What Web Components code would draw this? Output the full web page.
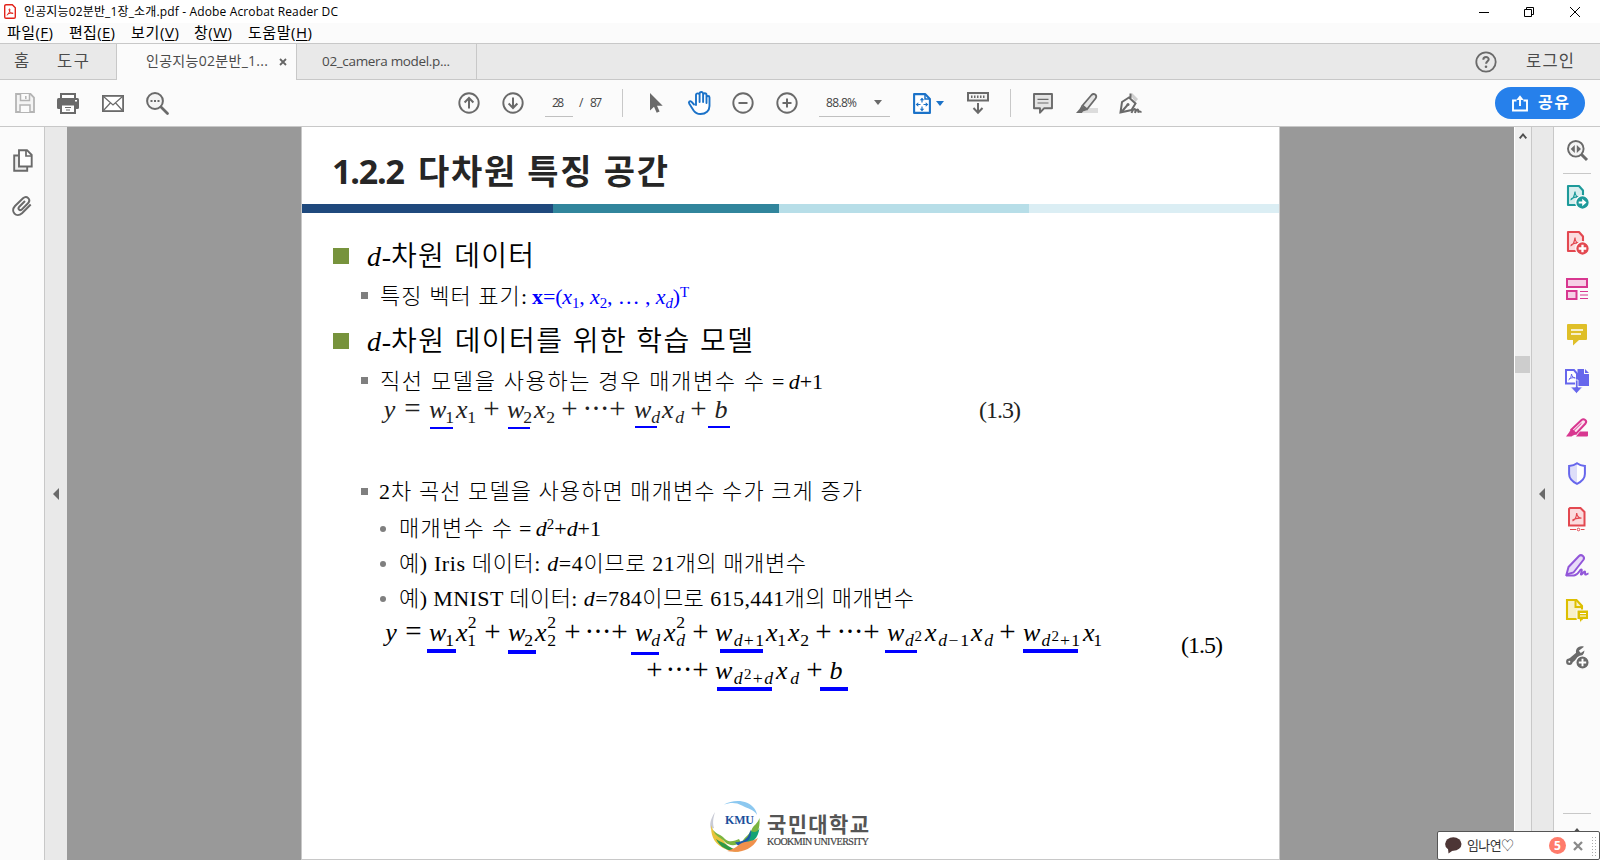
<!DOCTYPE html>
<html lang="ko">
<head>
<meta charset="utf-8">
<title>Adobe Acrobat Reader DC</title>
<style>
html,body{margin:0;padding:0;height:860px;overflow:hidden;background:#fbfbfb}
body{font-family:"Open Sans","Noto Sans CJK KR",sans-serif;color:#000}
</style>
</head>
<body>
<reader-app></reader-app>
<script>
const ICONS = {
pdf:[12,15,`<path d="M2 .7h6.3L11.3 3.700V13a1.300 1.300 0 0 1-1.300 1.300H2A1.300 1.300 0 0 1 .7 13V2A1.300 1.300 0 0 1 2 .7z" fill="#fff" stroke="#e2231a" stroke-width="1.400"/><path d="M2.800 11.200c1.500-.6 2.700-2.800 3.100-5.400.1-1.300-1-1.300-.8 0 .4 2.200 2 3.700 4 3.700M3.400 10.200c1.600-.9 3.800-1.300 5.800-1" fill="none" stroke="#e2231a" stroke-width="1"/>`],
min:[10,10,`<path d="M0 5.500h10" stroke="#000"/>`],
restore:[10,10,`<path d="M.5 2.500h7v7h-7zM2.500 2.500v-2h7v7h-2" fill="none" stroke="#000"/>`],
close:[10,10,`<path d="M0 0l10 10M10 0L0 10" stroke="#000"/>`],
tabx:[8,8,`<path d="M1 1l6 6M7 1L1 7" stroke="#666" stroke-width="1.800"/>`],
help:[22,22,`<circle cx="11" cy="11" r="9.700" fill="none" stroke="#6a6a6a" stroke-width="1.800"/><path d="M8.300 8.700c0-3.500 5.600-3.300 5.400-.3-.1 1.800-2.600 2-2.600 4.300" fill="none" stroke="#6a6a6a" stroke-width="2"/><circle cx="11" cy="15.700" r="1.300" fill="#6a6a6a"/>`],
save:[20,20,`<path d="M1 1h14.500L19 4.500V19H1z" fill="#f4f4f4" stroke="#b4b4b4" stroke-width="1.800"/><path d="M5.500 1v6.500h9V1M5 19v-7h10v7" fill="#fbfbfb" stroke="#b4b4b4" stroke-width="1.500"/><path d="M10.800 3v3" stroke="#b4b4b4" stroke-width="1.500"/>`],
print:[22,21,`<path d="M4 5V1h14v4" fill="#fff" stroke="#6a6a6a" stroke-width="2"/><rect y="5" width="22" height="11" rx="1.500" fill="#6a6a6a"/><rect x="4" y="11.500" width="14" height="8.500" fill="#fff" stroke="#6a6a6a" stroke-width="2"/><path d="M8 14.500h6M9 17h4" stroke="#6a6a6a"/><rect x="18" y="7" width="2" height="1.500" fill="#fff"/>`],
mail:[22,17,`<rect x=".9" y=".9" width="20.200" height="15.200" fill="#fff" stroke="#6a6a6a" stroke-width="1.800"/><path d="M1.500 1.500L11 10l9.500-8.500M1.500 15.500L8.300 8M20.500 15.500L13.700 8" fill="none" stroke="#6a6a6a" stroke-width="1.200"/>`],
find:[23,23,`<circle cx="9" cy="9" r="7.900" fill="#f4f4f4" stroke="#6a6a6a" stroke-width="2"/><path d="M15 15l6.500 6.500" stroke="#6a6a6a" stroke-width="2.800" stroke-linecap="round"/><path d="M4.500 9h2M8 9h2M11.500 9h2" stroke="#6a6a6a" stroke-width="2"/>`],
up:[22,22,`<circle cx="11" cy="11" r="9.700" fill="none" stroke="#6a6a6a" stroke-width="1.900"/><path d="M11 16.500V6.500M6.600 10.500L11 6l4.400 4.500" fill="none" stroke="#6a6a6a" stroke-width="2"/>`],
down:[22,22,`<circle cx="11" cy="11" r="9.700" fill="none" stroke="#6a6a6a" stroke-width="1.900"/><path d="M11 5.500v10M6.600 11.500L11 16l4.400-4.500" fill="none" stroke="#6a6a6a" stroke-width="2"/>`],
minus:[22,22,`<circle cx="11" cy="11" r="9.700" fill="none" stroke="#6a6a6a" stroke-width="1.900"/><path d="M6.500 11h9" stroke="#6a6a6a" stroke-width="2"/>`],
plus:[22,22,`<circle cx="11" cy="11" r="9.700" fill="none" stroke="#6a6a6a" stroke-width="1.900"/><path d="M6.500 11h9M11 6.500v9" stroke="#6a6a6a" stroke-width="2"/>`],
cursor:[13,20,`<path d="M0 0v17.500l4-3.800 2.700 6L9.600 18.400 7 12.700h5.700z" fill="#6a6a6a"/>`],
hand:[23,24,`<path d="M6 13.500L3.600 10.900C1.900 9.300.2 10.800 1.300 12.800L5.600 19.500C7.300 22 9 23 12.500 23c5.500 0 9-3.500 9-8V6.500c0-2-3-2-3 0V4c0-2.300-3.400-2.300-3.400 0V2.700c0-2.300-3.500-2.300-3.500 0V4C11.500 1.800 8 1.800 8 4v10M11.600 11V3.500M15.100 11V3.500M18.500 12V6" fill="#fff" stroke="#1b72c8" stroke-width="1.900" stroke-linecap="round" stroke-linejoin="round"/>`],
caret:[8,5,`<path d="M0 0h8L4 5z" fill="#6a6a6a"/>`],
bcaret:[8,5,`<path d="M0 0h8L4 5z" fill="#1b72c8"/>`],
fit:[18,21,`<path d="M1.100 1.100h11L16.900 6v13.900H1.100z" fill="#fff" stroke="#1b72c8" stroke-width="2.100" stroke-linejoin="round"/><path d="M12 1v5h5" fill="none" stroke="#1b72c8" stroke-width="1.500"/><path d="M9 5.500v4M9 13.500v4M3.500 11.500h4M10.500 11.500h4" stroke="#1b72c8" stroke-width="1.200"/><path d="M6.700 7.300L9 4.700l2.300 2.600zM6.700 15.700l2.300 2.600 2.300-2.600zM5.300 9.200L2.700 11.500l2.600 2.300zM12.700 9.200l2.600 2.300-2.600 2.300z" fill="#1b72c8"/>`],
ruler:[22,22,`<rect x="1" y="1" width="20" height="7.500" fill="#f4f4f4" stroke="#6a6a6a" stroke-width="2"/><path d="M4 4.800h14" stroke="#6a6a6a" stroke-width="2.500" stroke-dasharray="1.500 1.500"/><path d="M11 11v9M6.500 16l4.500 4.700 4.500-4.700" fill="none" stroke="#6a6a6a" stroke-width="2"/>`],
note:[20,21,`<path d="M1 1h18v14.300h-8L7 19.700v-4.400H1z" fill="#e4e4e4" stroke="#6a6a6a" stroke-width="1.900" stroke-linejoin="round"/><path d="M4.500 6.300h11M4.500 10h11" stroke="#6a6a6a" stroke-width="1.200"/>`],
marker:[22,21,`<path d="M6 20h16v-5H11z" fill="#dcdcdc"/><path d="M6.500 12.500L15.500 2c2.500-2.500 6 .3 4.200 3.200L11 16.300z" fill="#e4e4e4" stroke="#6a6a6a" stroke-width="1.800"/><path d="M5.500 12.500l5.800 4.500L7 18.500 6 20H0l3.500-4z" fill="#6a6a6a"/>`],
pen:[24,21,`<path d="M11.500 2.500L13 0l6 6-2.500 3z" fill="#cfcfcf"/><path d="M1.500 19.500l1.500-10.500 7-4.500 6.500 6-4 6.500zM11.500.5v4.500M2 19.500l6.500-7.500" fill="none" stroke="#6a6a6a" stroke-width="2"/><circle cx="9" cy="11.500" r="1.500" fill="#6a6a6a"/><path d="M12.500 20c2-5 5-6 3.500 0 2-5 4-4.500 3-.5 1.500-2 2-.5 3.500-.5" fill="none" stroke="#6a6a6a" stroke-width="1.900"/>`],
share:[16,17,`<path d="M4.500 5.500H1v10h14v-10h-3.500" fill="none" stroke="#fff" stroke-width="1.900"/><path d="M8 11V2.500" stroke="#fff" stroke-width="1.900"/><path d="M4.300 5L8 .3 11.700 5z" fill="#fff"/>`],
pages:[20,23,`<path d="M5 6.500H1.200v15.200h13V18" fill="#eee" stroke="#6a6a6a" stroke-width="1.900"/><path d="M6 1.200h8L18.700 6v11.500H6z" fill="#fff" stroke="#6a6a6a" stroke-width="1.900"/><path d="M13 1v6h6" fill="none" stroke="#6a6a6a" stroke-width="1.700"/>`],
clip:[20,22,`<path d="M13 6L7.300 11.700c-2 2.200.4 4.600 2.500 2.700L16 8.300c3.400-3.800-1.200-8.300-5-5L3 11c-5 5.500 1.300 12.300 7 7.200L18.700 9.500" fill="none" stroke="#6a6a6a" stroke-width="2"/>`],
tri:[6,12,`<path d="M6 0v12L0 6z" fill="#6a6a6a"/>`],
chev:[8,6,`<path d="M.7 5.300L4 1.500l3.300 3.800" fill="none" stroke="#505050" stroke-width="1.900"/>`],
rfind:[21,21,`<circle cx="8.800" cy="8.800" r="7.800" fill="#f4f4f4" stroke="#6a6a6a" stroke-width="1.900"/><path d="M14.500 14.500l5.500 5.500" stroke="#6a6a6a" stroke-width="3"/><path d="M7.800 5v8L3.700 9zM9.800 5v8L14 9z" fill="#6a6a6a"/>`],
exp:[23,24,`<path d="M2 1h11l4 4.500V20H2z" fill="#d8eeee" stroke="#1d9a9a" stroke-width="2.100" stroke-linejoin="round"/><path d="M4.500 15c2-.8 4-4 4.500-8.500M9 6.500C9 10 11 12.500 14 12.500M5 14c2-1.500 5-2.300 8.500-2" fill="none" stroke="#1d9a9a" stroke-width="1.200"/><circle cx="16.500" cy="17.500" r="6.800" fill="#1d9a9a" stroke="#fbfbfb" stroke-width="1.300"/><path d="M12.700 16.400h3.500v-2.700l4.300 3.800-4.300 3.800v-2.700h-3.500z" fill="#fff"/>`],
crt:[23,24,`<path d="M2 1h11l4 4.500V20H2z" fill="#fbdcde" stroke="#e34850" stroke-width="2.100" stroke-linejoin="round"/><path d="M4.500 15c2-.8 4-4 4.500-8.500M9 6.500C9 10 11 12.500 14 12.500M5 14c2-1.500 5-2.300 8.500-2" fill="none" stroke="#e34850" stroke-width="1.200"/><circle cx="16.500" cy="17.500" r="6.800" fill="#e34850" stroke="#fbfbfb" stroke-width="1.300"/><path d="M12.700 17.500h7.600M16.500 13.700v7.600" stroke="#fff" stroke-width="2.300"/>`],
org:[22,22,`<rect x="1" y="1" width="20" height="8" fill="#f6d0e6" stroke="#d83790" stroke-width="2"/><rect x="1" y="13" width="9.500" height="8" fill="#f6d0e6" stroke="#d83790" stroke-width="2"/><path d="M14 13.500h8M14 17h8M14 20.500h8" stroke="#d83790"/>`],
ycom:[20,22,`<path d="M1 0h18a1 1 0 0 1 1 1v14a1 1 0 0 1-1 1h-7l-6 5.500V16H1a1 1 0 0 1-1-1V1a1 1 0 0 1 1-1z" fill="#dfbf28"/><path d="M4 6h12M4 10h10" stroke="#fff" stroke-width="1.600"/>`],
comb:[24,25,`<path d="M12.500 0H19v5h5v12H12.500z" fill="#6767ec"/><path d="M20 0l4 4h-4z" fill="#6767ec"/><path d="M1 1h8l3 3.500V14.500H1z" fill="#fff" stroke="#6767ec" stroke-width="2"/><path d="M3.500 11c2-1 2.800-3.500 3-6M6.500 5C7 8 8.500 8.800 10.500 9M4 10c2-1.200 4-1.500 6-1.200" fill="none" stroke="#6767ec"/><path d="M10.500 11h2.500v7h4.500l-6 6.500-6-6.500h5z" fill="#6767ec" stroke="#fbfbfb" stroke-width=".8"/>`],
red:[22,19,`<path d="M12 18.500h9a1 1 0 0 0 1-1v-4H14l-4 5z" fill="#d83790"/><path d="M5.500 11.500L15.500 2c2.500-2 6 1 4 3.500L10 15.700z" fill="#fbe3f0" stroke="#d83790" stroke-width="2"/><path d="M7.500 13l8-7.800" stroke="#d83790" stroke-width="1"/><path d="M5 11l6 5-4 1.500-1.500 1H0l3-4z" fill="#d83790"/>`],
shield:[18,23,`<path d="M9 1.200c2.300 1.800 4.800 2.500 7.900 2.800v8c0 4.500-3.500 7.700-7.900 9.800-4.400-2.100-7.900-5.300-7.900-9.800V4C4.200 3.700 6.700 3 9 1.200z" fill="#fff"/><path d="M9 1.200v20.600c-4.400-2.100-7.900-5.300-7.900-9.800V4C4.200 3.700 6.700 3 9 1.200z" fill="#dedef9"/><path d="M9 1.200c2.300 1.800 4.800 2.500 7.900 2.800v8c0 4.500-3.500 7.700-7.900 9.800-4.400-2.100-7.900-5.300-7.900-9.800V4C4.200 3.700 6.700 3 9 1.200z" fill="none" stroke="#6767ec" stroke-width="2"/>`],
comp:[18,24,`<path d="M2 1h10.500L16.500 5v13.500H1V2z" fill="#fbdcde" stroke="#e34850" stroke-width="2"/><path d="M4.500 14c2-1 4-4 4.200-8M8.700 6C9 9 10.500 11 13.500 11.200M4.500 13c2-1.200 5-2 8.500-1.800" fill="none" stroke="#e34850" stroke-width="1.200"/><path d="M2 22.500h6M13 22.500h3.500" stroke="#e34850" stroke-width="1.200"/><circle cx="10.500" cy="22.500" r="1.300" fill="none" stroke="#e34850"/>`],
sign:[24,23,`<path d="M3.500 13L14 2c2.500-2.300 6.500 1 4.300 4L8.500 18.500 1.500 20.500z" fill="#e8dcf8" stroke="#9256d9" stroke-width="2"/><path d="M1 21.500h8c5-.5 6-7 7.500-6s-2 5.500 0 5 2-3.500 3.300-3-.8 3.500 1 3 1.200-1 2.700-.7" fill="none" stroke="#9256d9" stroke-width="1.900"/>`],
ysend:[22,24,`<path d="M1 1h9.500L16 7v13H1z" fill="#f8f0c8" stroke="#ddbf00" stroke-width="2.100"/><path d="M9.500 1v7H16" fill="none" stroke="#ddbf00" stroke-width="2"/><path d="M11 11h11.500v9.500h-5.500l-3.500 3.500v-3.500H11z" fill="#ddbf00" stroke="#fbfbfb"/><path d="M14 14.500h6M14 17h6" stroke="#fff" stroke-width="1.200"/>`],
wrench:[23,23,`<path d="M2.500 16.500L12 8.500" stroke="#6a6a6a" stroke-width="5"/><circle cx="3.300" cy="15.700" r="3.200" fill="#6a6a6a"/><circle cx="3.300" cy="15.700" r="1" fill="#fff"/><path d="M18 .7C12 -1 8.500 3.500 10.500 8.500 13 11.800 18 10.500 18.500 4.500L14.800 7 12.800 4.700z" fill="#6a6a6a"/><circle cx="16.500" cy="16.500" r="6.700" fill="#6a6a6a" stroke="#fbfbfb" stroke-width="1.300"/><path d="M12.800 16.500h7.400M16.500 12.800v7.400" stroke="#fff" stroke-width="1.900"/>`],
bubble:[17,17,`<ellipse cx="8.300" cy="7" rx="8.200" ry="6.800" fill="#4d3636"/><path d="M3 11.500L3.500 16.500 8.500 13z" fill="#4d3636"/>`],
px:[10,10,`<path d="M1 1l8 8M9 1L1 9" stroke="#8a8a8a" stroke-width="2.300"/>`],
logo:[50,52,`<path d="M14 4.500C23-1 38-.5 44 8c1.800 2.500 2.800 4.500 3 7C44 9 37 8.500 32 5.500 26 2 20 2.500 14 4.500z" fill="#8cc8f0"/><path d="M5 12C0 20-.5 25 1 29l3-1C2.500 23 3 19 5 12z" fill="#c9cbd6"/><path d="M1 25C1 33 2 42 13 48c7 3.500 13 4 17 3.500C22 48 17 47 13 40 9 35 3 33 1 25z" fill="#e9c43b"/><path d="M3 30c4 5 8 4 12 9 4 4 10 2 14 0l2 4c-6 3-12 3-16-1C10 37 6 37 3 30z" fill="#7bb540"/><path d="M6 39c4 3 9 4 12 7 3 2 6 3 10 5-8 1-18-3-22-12z" fill="#2f9a48"/><path d="M49.500 18c1 14-5 24-17 25-1-4 6-7 9-13 2-5 6-6 8-12z" fill="#7bb540"/><path d="M49.500 28C48 40 40 45 33 43c1-4 7-5 8-12 3 2 7 1 8.500-3z" fill="#14a374"/><path d="M25 42.500c6-1 13-1 15.500-13 1.500 8-1 13-12.500 16z" fill="#1d5aa8"/><path d="M17 51c9 2 25 1 31-13-6 4-13 3-18 6-3 3-7 5-13 7z" fill="#f0914d"/>`]
};
const fits=[];
const define=(name,css,html='<slot></slot>',fn)=>customElements.define(name,class extends HTMLElement{
  constructor(){super();this.attachShadow({mode:'open'}).innerHTML=`<style>${css}</style>${typeof html==='function'?'':html}`;}
  connectedCallback(){ if(typeof html==='function'&&!this.ready){this.ready=true;this.shadowRoot.innerHTML+=html(this);} if(fn)fn(this);}
});
// Places a list of [x, width, markup] one after another, the space between as a margin.
const row=(start,items)=>{let p=start;return items.map(([x,w,h])=>{const g=x-p;p=x+w;return `<div style="margin-left:${g}px;width:${w}px;flex:none">${h}</div>`}).join('')};
const ic=n=>`<ui-icon name="${n}"></ui-icon>`;
const ft=(w,t)=>`<fit-text w="${w}">${t}</fit-text>`;

define('ui-icon',':host{display:block;line-height:0}svg{display:block;overflow:visible}',el=>{const [w,h,s]=ICONS[el.getAttribute('name')];return `<svg width="${w}" height="${h}" viewBox="0 0 ${w} ${h}">${s}</svg>`});
// Spreads its text over a given width by letter spacing.
define('fit-text',':host{display:block;white-space:nowrap}','<slot></slot>',el=>fits.push(el));

define('title-bar',':host{display:flex;height:23px;align-items:center;background:#fff;font-size:12px;line-height:23px}',()=>row(0,[[4,12,ic('pdf')],[24,314,ft(314,'인공지능02분반_1장_소개.pdf - Adobe Acrobat Reader DC')],[1479,10,ic('min')],[1524,10,ic('restore')],[1570,10,ic('close')]]));
define('menu-bar',':host{display:flex;height:20px;background:#fbfbfb;font-size:15px;line-height:19px}u{text-underline-offset:2px}',()=>row(0,[[7,46,ft(46,'파일(<u>F</u>)')],[69,46,ft(46,'편집(<u>E</u>)')],[131,48,ft(48,'보기(<u>V</u>)')],[194,38,ft(38,'창(<u>W</u>)')],[248,64,ft(64,'도움말(<u>H</u>)')]]));
define('tab-bar',`:host{display:flex;height:37px;box-sizing:border-box;border-top:1px solid #c8c8c8;border-bottom:1px solid #c8c8c8;background:#e9e9e9;color:#4b4b4b;font-size:16.500px;line-height:32px}
section{display:flex;align-items:center;box-sizing:border-box;flex:none;border-right:1px solid #c8c8c8;height:35px}.on{background:#fbfbfb;height:36px;font-size:14px}.two{font-size:13.500px}.r{border:0;flex:1}fit-text{padding-bottom:2px}`,
()=>`<section style="width:117px">${row(0,[[14,17,ft(17,'홈')],[57,32,ft(32,'도구')]])}</section><section class="on" style="width:180px">${row(117,[[146,122,ft(122,'인공지능02분반_1...')],[279,8,ic('tabx')]])}</section><section class="two" style="width:180px">${row(297,[[322,128,ft(128,'02_camera model.p...')]])}</section><section class="r">${row(477,[[1474.500,22,ic('help')],[1526,48,ft(48,'로그인')]])}</section>`);
define('share-button',':host{display:flex;align-items:center;width:90px;height:32px;border-radius:16px;background:#2680eb;color:#fff;font-weight:600;font-size:16px;line-height:28px}fit-text{padding-bottom:2px}',()=>row(0,[[17,16,ic('share')],[43,31,ft(31,'공유')]]));
define('tool-bar',`:host{display:flex;align-items:center;height:47px;box-sizing:border-box;border-bottom:1px solid #c8c8c8;background:#fbfbfb;color:#444;font-size:12px}
.sep{height:28px;background:#c8c8c8}.f{height:27px;line-height:25px;box-sizing:border-box;border-bottom:1px solid #c0c0c0;display:flex;align-items:center}.v{line-height:25px;padding-bottom:2px}`,
()=>row(0,[[15,20,ic('save')],[57,22,ic('print')],[102,22,ic('mail')],[146,23,ic('find')],[458,22,ic('up')],[502,22,ic('down')],[545,28,`<div class="f">${row(0,[[7,12,ft(12,'28')]])}</div>`],[579,5,`<div class="v">${ft(5,'/')}</div>`],[590,12,`<div class="v">${ft(12,'87')}</div>`],[622,1,'<div class="sep"></div>'],[650,13,ic('cursor')],[688,23,ic('hand')],[732,22,ic('minus')],[776,22,ic('plus')],[819,71,`<div class="f">${row(0,[[7,31,ft(31,'88.8%')],[55,8,ic('caret')]])}</div>`],[913,18,ic('fit')],[936,8,ic('bcaret')],[967,22,ic('ruler')],[1010,1,'<div class="sep"></div>'],[1033,20,ic('note')],[1076,22,ic('marker')],[1119,24,ic('pen')],[1495,90,'<share-button></share-button>']]));
define('side-nav',':host{display:flex;flex-direction:column;align-items:flex-start;width:44px;background:#fbfbfb;border-right:1px solid #c8c8c8;flex:none}.a{margin:22px 0 0 13px}.b{margin:23px 0 0 12px}',`<div class="a">${ic('pages')}</div><div class="b">${ic('clip')}</div>`);
define('fold-strip',':host{display:flex;align-items:center;justify-content:center;width:22px;background:#e9e9e9;flex:none;box-sizing:border-box;padding-right:0}');
define('tool-rail',':host{display:flex;flex-direction:column;width:46px;box-sizing:border-box;padding-left:1px;border-left:1px solid #c8c8c8;background:#fbfbfb;flex:none}.s{height:46px;display:flex;align-items:center;justify-content:center;flex:none}hr{border:0;height:1px;background:#c8c8c8;width:28px;margin:0 auto;flex:none}',
`<div class="s">${ic('rfind')}</div><hr>${['exp','crt','org','ycom','comb','red','shield','comp','sign','ysend','wrench'].map(n=>`<div class="s">${ic(n)}</div>`).join('')}<hr style="margin-top:133px"><div style="margin:14px auto 0">${ic('chev')}</div>`);
define('scroll-bar',':host{display:flex;flex-direction:column;align-items:center;width:16px;background:#f0f0f0;border-left:1px solid #fff;border-right:1px solid #c8c8c8;flex:none}.t{width:15px;height:17px;background:#cdcdcd;margin-top:217px;align-self:flex-start}',`<div style="margin-top:6px">${ic('chev')}</div><div class="t"></div>`);

// One line of the slide: its bottom edge is the baseline of its text.
define('slide-line',`:host{display:flex;align-items:baseline;line-height:1;flex:none;height:var(--b)}:host::before{content:"";width:0;height:var(--b);flex:none}
.bul{position:relative;height:1px}.bul i{display:block;position:absolute;left:0;bottom:0}
fit-text{font-family:"Liberation Serif","Noto Sans CJK KR",serif;font-weight:300}
.k fit-text{font-family:"Noto Sans CJK KR",sans-serif;font-weight:350}
i,b,em{line-height:0}b{font-weight:700}em{font-style:italic}
sub,sup{font-size:.68em;line-height:0;vertical-align:baseline;position:relative}sub{top:.3em}sup{top:-.5em}
.t fit-text{font-family:"Open Sans","Noto Sans CJK KR",sans-serif;font-weight:700}
.m{position:relative}.m>u{position:absolute;background:#00f;display:block}.m fit-text{font-style:italic;font-family:"Liberation Serif",serif;font-weight:400}
.n fit-text{font-style:normal}.m sup{top:-.75em;margin-right:-.56em}sub sup,.m sub sup{font-size:.85em;top:-.35em;margin:0}`,
el=>{const L=LINES[el.getAttribute('n')];let p=302;return L.items.map(([x,w,h,c='',u,fs])=>{const g=x-p;p=x+w;const ul=u?`<u style="left:${u[0]-x}px;width:${u[1]-u[0]}px;bottom:${6-u[2]}px;height:${u[3]}px"></u>`:'';const inner=c==='bul'?h:`<fit-text ${c.includes('o')?'':`w="${w}"`} style="font-size:${fs||L.fs}px;${L.st||''}${c.includes('o')?'text-align:center;':''}">${h}</fit-text>`;return `<div class="${c==='bul'?'bul':c}" style="margin-left:${g}px;width:${w}px;flex:none">${inner}${ul}</div>`}).join('')});
const sq=(s,c,b,r=0)=>`<i style="width:${s}px;height:${s}px;background:${c};bottom:${b}px;border-radius:${r}px"></i>`;
const pl=x=>[x-1,17,'+','m n o',0,29], dots=x=>[x-2,21,'⋯','m n o'];
const N=s=>`<span style="font-style:normal">${s}</span>`;
const x2=(n,it)=>`x<sup>${N('2')}</sup><sub>${it?n:N(n)}</sub>`;
const LINES={
title:{fs:34,st:'color:#262626;',items:[[332,73,'1.2.2','t'],[418,250,'다차원 특징 공간','t']]},
l1:{fs:28,items:[[333,16,sq(16,'#77933c',2),'bul'],[367,24,'<em>d</em>-'],[391,143,'차원 데이터','k']]},
l2:{fs:22,items:[[361,7,sq(7,'#7f7f7f',5),'bul'],[380,147,'특징 벡터 표기:'],[532,157,'<span style="color:#00f"><b>x</b>=(<em>x</em><sub>1</sub>, <em>x</em><sub>2</sub>, … , <em>x<sub>d</sub></em>)<sup>T</sup></span>']]},
l3:{fs:28,items:[[333,16,sq(16,'#77933c',2),'bul'],[367,24,'<em>d</em>-'],[391,362,'차원 데이터를 위한 학습 모델','k']]},
l4:{fs:22,items:[[361,7,sq(7,'#7f7f7f',5),'bul'],[380,384,'직선 모델을 사용하는 경우 매개변수 수'],[772,51,'=&#8201;<em>d</em>+1']]},
e1:{fs:26,st:'color:#222;',items:[[383,13,'y','m o'],[404,17,'=','m n o',0,29],[429,25,'w<sub>'+N(1)+'</sub>','m',[430,453,12,2]],[456,20,'x<sub>'+N(1)+'</sub>','m'],pl(484),[507,25,'w<sub>'+N(2)+'</sub>','m',[508,530,12,2]],[534,21,'x<sub>'+N(2)+'</sub>','m'],pl(562),dots(585),pl(610),[634,26,'w<sub>d</sub>','m',[635,657,11,2]],[662,22,'x<sub>d</sub>','m'],pl(691),[714,14,'b','m o',[708,730,11,2]],[979,42,'(1.3)','m n',0,24]]},
l5:{fs:22,items:[[361,7,sq(7,'#7f7f7f',4),'bul'],[379,483,'2차 곡선 모델을 사용하면 매개변수 수가 크게 증가']]},
l6:{fs:22,items:[[380,6,sq(6,'#7f7f7f',4,3),'bul'],[399,113,'매개변수 수'],[519,82,'=&#8201;<em>d</em><sup>2</sup>+<em>d</em>+1']]},
l7:{fs:22,items:[[380,6,sq(6,'#7f7f7f',4,3),'bul'],[399,407,'예) Iris 데이터: <em>d</em>=4이므로 21개의 매개변수']]},
l8:{fs:22,items:[[380,6,sq(6,'#7f7f7f',4,3),'bul'],[399,515,'예) MNIST 데이터: <em>d</em>=784이므로 615,441개의 매개변수']]},
e2:{fs:26,items:[[384,14,'y','m o'],[405,17,'=','m n o',0,29],[429,25,'w<sub>'+N(1)+'</sub>','m',[427,456,13,4]],[456,21,x2(1),'m'],pl(485),[508,25,'w<sub>'+N(2)+'</sub>','m',[508,536,14,4]],[535,22,x2(2),'m'],pl(565),dots(587),pl(612),[635,25,'w<sub>d</sub>','m',[631,659,15,3]],[664,22,x2('d',1),'m'],pl(693),[715,49,'w<sub>d'+N('+1')+'</sub>','m',[720,763,13,4]],[766,20,'x<sub>'+N(1)+'</sub>','m'],[788,21,'x<sub>'+N(2)+'</sub>','m'],pl(816),dots(839),pl(864),[887,35,'w<sub>d<sup>'+N(2)+'</sup></sub>','m',[885,917,13,3]],[925,44,'x<sub>d'+N('−1')+'</sub>','m'],[971,22,'x<sub>d</sub>','m'],pl(1000),[1023,57,'w<sub>d<sup>'+N(2)+'</sup>'+N('+1')+'</sub>','m',[1023,1078,13,4]],[1083,19,'x<sub>'+N(1)+'</sub>','m'],[1181,42,'<span style="position:relative;top:12px;font-style:normal">(1.5)</span>','m',0,24]]},
e3:{fs:26,items:[pl(647),dots(668),pl(693),[715,58,'w<sub>d<sup>'+N(2)+'</sup>'+N('+')+'d</sub>','m',[717,772,13,4]],[776,23,'x<sub>d</sub>','m'],pl(807),[829,14,'b','m o',[820,848,13,4]]]}
};
define('school-logo',`:host{display:flex;margin:73px 0 0 408px;height:52px;align-items:flex-start;white-space:nowrap}
.m{position:relative;width:50px}.m b{position:absolute;left:15px;top:12px;font:700 12px/16px "Liberation Serif",serif;color:#1b4f9c;width:29px}
.w{margin:12px 0 0 7px;width:102px}.ko{font:700 21px/22px "Noto Sans CJK KR",sans-serif;color:#555}.en{font:400 10px/12px "Liberation Serif",serif;color:#444;margin-top:2px;-webkit-text-stroke:.2px #444}`,
`<div class="m">${ic('logo')}<b>${ft(29,'KMU')}</b></div><div class="w"><div class="ko">${ft(102,'국민대학교')}</div><div class="en">${ft(102,'KOOKMIN UNIVERSITY')}</div></div>`);
const ln=(n,b)=>`<slide-line n="${n}" style="--b:${b}px"></slide-line>`;
define('slide-page',':host{display:flex;flex-direction:column;box-sizing:border-box;width:979px;height:733px;background:#fff;border-left:1px solid #c8c8c8;border-bottom:1px solid #c8c8c8;border-right:1px solid #c8c8c8;margin-left:234px;flex:none;overflow:hidden}.bar{display:flex;height:9px;margin-top:20px;flex:none}.bar i{display:block}',
`${ln('title',57)}<div class="bar"><i style="width:251px;background:#1f497d"></i><i style="width:226px;background:#31859c"></i><i style="width:250px;background:#b7dee8"></i><i style="flex:1;background:#dbeef4"></i></div>${ln('l1',53)}${ln('l2',38)}${ln('l3',47)}${ln('l4',38)}${ln('e1',29)}${ln('l5',81)}${ln('l6',37)}${ln('l7',35)}${ln('l8',35)}${ln('e2',35)}${ln('e3',38)}<school-logo style="margin-top:121px"></school-logo>`);
define('chat-toast',`:host{position:absolute;left:1437px;top:831px;width:163px;height:29px;box-sizing:border-box;border:1px solid #555;border-radius:2px;background:#fff;display:flex;align-items:center;font-size:13px;line-height:24px;color:#333}
fit-text{padding-bottom:2px}.n{width:17px;height:17px;border-radius:9px;background:#ff7b6b;color:#fff;font:700 12px/17px "Open Sans",sans-serif;text-align:center}.g{height:20px;background:radial-gradient(circle,#aaa .7px,transparent .9px) 0 0/3px 3px}`,
()=>row(1438,[[1445,17,ic('bubble')],[1467,48,ft(47,'임나연♡')],[1549,17,'<div class="n">5</div>'],[1573,10,ic('px')],[1591,6,'<div class="g"></div>']]));
define('reader-app',':host{display:flex;flex-direction:column;width:1600px;height:860px;overflow:hidden;position:relative}main{display:flex;flex:1;min-height:0}.doc{display:flex;width:1447px;background:#999;flex:none}',
`<title-bar></title-bar><menu-bar></menu-bar><tab-bar></tab-bar><tool-bar></tool-bar><main><side-nav></side-nav><fold-strip>${ic('tri')}</fold-strip><div class="doc"><slide-page></slide-page></div><scroll-bar></scroll-bar><fold-strip style="width:21px;padding-right:2px">${ic('tri')}</fold-strip><tool-rail></tool-rail></main><chat-toast></chat-toast>`);

for(const el of fits){
  const w=+el.getAttribute('w'); if(!w) continue;
  const r=document.createRange(); r.selectNodeContents(el);
  const n=[...el.textContent].length, nat=r.getBoundingClientRect().width;
  if(n>1) el.style.letterSpacing=((w-nat)/(n-1)).toFixed(3)+'px';
}
</script>
</body>
</html>
